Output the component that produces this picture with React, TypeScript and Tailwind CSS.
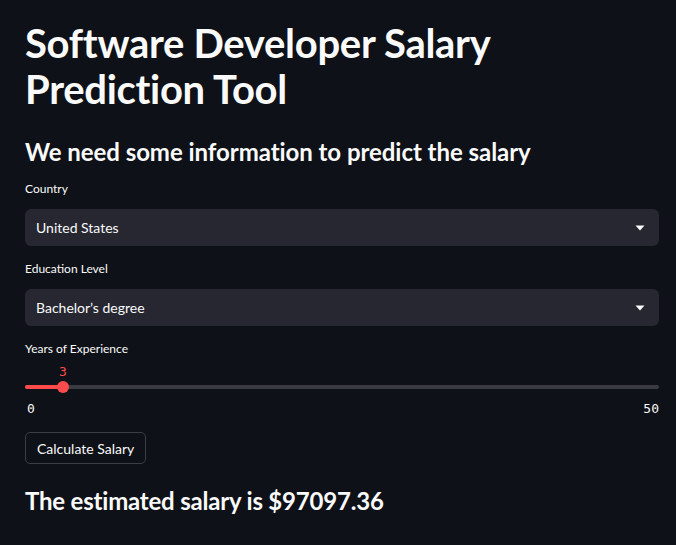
import React from 'react';

const Caret = () => (
  <svg width="10" height="6" viewBox="0 0 10 6" className="shrink-0">
    <path d="M0.5 0.5h9L5 5.5z" fill="#fafafa" />
  </svg>
);

const SelectBox = ({ label, value }: { label: string; value: string }) => (
  <div className="flex flex-col">
    <label className="text-[12px] text-[#fafafa] leading-none h-[14px] mb-[12px]">{label}</label>
    <div className="h-[37px] rounded-[6px] bg-[#262730] flex items-center justify-between pl-[11px] pr-[14px]">
      <span className="text-[14px] text-[#fafafa]">{value}</span>
      <Caret />
    </div>
  </div>
);

export default function App() {
  const years = 3;
  const max = 50;
  const pct = (years / max) * 100;

  return (
    <div className="w-[676px] h-[545px] bg-[#0e1117] text-[#fafafa] font-['Lato','Liberation_Sans',sans-serif] overflow-hidden">
      <div className="w-[634px] ml-[25px] flex flex-col">
        <h1 className="mt-[20px] text-[40px] font-bold leading-[46px] tracking-[-0.3px]">
          Software Developer Salary Prediction Tool
        </h1>
        <h2 className="mt-[24px] text-[24px] font-bold leading-[32px] tracking-[-0.05px]">
          We need some information to predict the salary
        </h2>

        <div className="mt-[15px] flex flex-col gap-[17px]">
          <SelectBox label="Country" value="United States" />
          <SelectBox label="Education Level" value="Bachelor’s degree" />
        </div>

        <div className="mt-[17px] flex flex-col">
          <label className="text-[12px] leading-none h-[14px]">Years of Experience</label>
          <div className="relative h-[40px] mt-[2px]">
            <div className="absolute left-0 right-0 top-[26px] h-[4px] rounded-full bg-[#3a3b42]" />
            <div className="absolute left-0 top-[26px] h-[4px] rounded-full bg-[#ff4b4b]" style={{ width: `${pct}%` }} />
            <div
              className="absolute top-[22px] w-[12px] h-[12px] -ml-[6px] rounded-full bg-[#ff4b4b]"
              style={{ left: `${pct}%` }}
            />
            <span
              className="absolute top-[6px] -translate-x-1/2 text-[13px] leading-none text-[#ff4b4b] font-['DejaVu_Sans_Mono',monospace]"
              style={{ left: `${pct}%` }}
            >
              {years}
            </span>
          </div>
          <div className="flex justify-between text-[13px] leading-none font-['DejaVu_Sans_Mono',monospace] mt-[3px] pl-[2px]">
            <span>0</span>
            <span>{max}</span>
          </div>
        </div>

        <div className="mt-[17px]">
          <button className="h-[32px] px-[11px] rounded-[5px] border border-[#3c3e47] text-[14px] text-[#fafafa]">
            Calculate Salary
          </button>
        </div>

        <h3 className="mt-[21px] text-[24px] font-bold leading-[32px] tracking-[-0.2px]">
          The estimated salary is $97097.36
        </h3>
      </div>
    </div>
  );
}
